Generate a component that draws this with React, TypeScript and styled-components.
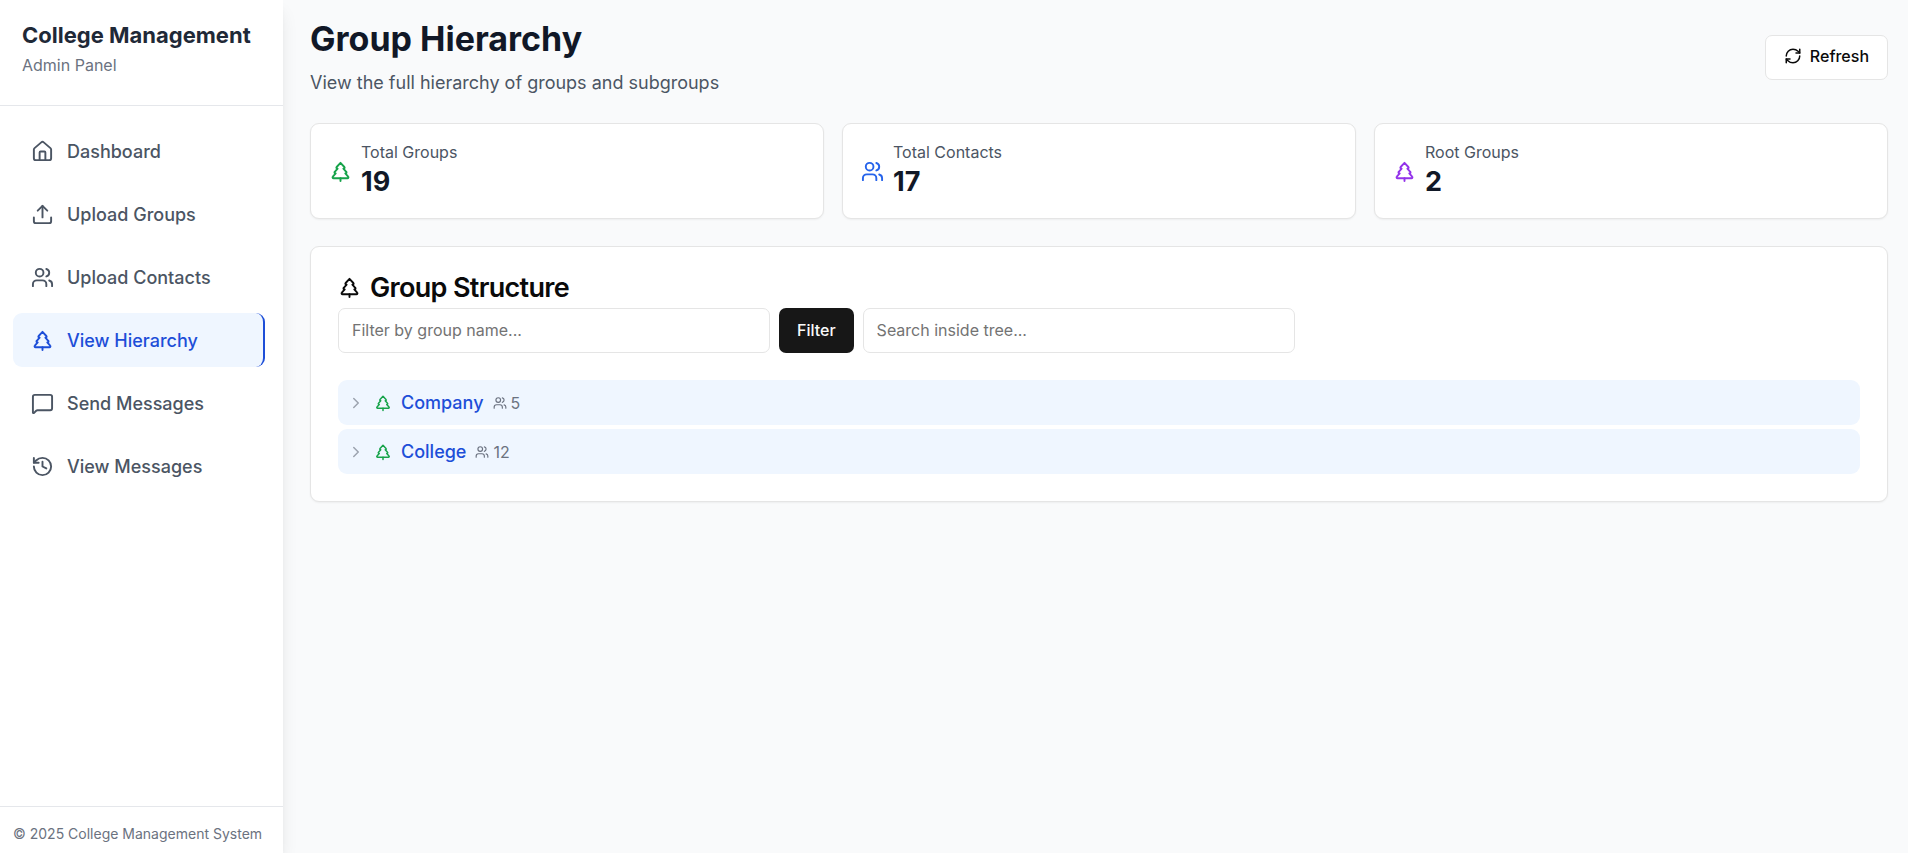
import React from "react";
import styled, { createGlobalStyle } from "styled-components";
import {
  ChevronRight,
  History,
  House,
  MessageSquare,
  RefreshCw,
  TreePine,
  Upload,
  Users,
} from "lucide-react";
import type { LucideIcon } from "lucide-react";

const GlobalStyle = createGlobalStyle`
  *, *::before, *::after { box-sizing: border-box; }
  body {
    margin: 0;
    background: #f9fafb;
    color: #0a0a0a;
    font-family: Inter, "Liberation Sans", sans-serif;
    font-size: 18px;
    line-height: 27px;
  }
  h1, h2, p, ul { margin: 0; padding: 0; }
  ul { list-style: none; }
  button, input { font: inherit; }
  svg { display: block; flex-shrink: 0; }
`;

const Shell = styled.div`
  display: flex;
  min-height: 100vh;
`;

const Sidebar = styled.aside`
  position: sticky;
  top: 0;
  display: flex;
  flex-direction: column;
  flex: 0 0 283px;
  height: 100vh;
  background: #fff;
  box-shadow: 0 11px 17px -3px rgba(0, 0, 0, 0.1), 0 4px 7px -4px rgba(0, 0, 0, 0.1);
`;

const Brand = styled.div`
  padding: 20px 22px 28px;
  border-bottom: 1px solid #e5e7eb;
`;

const BrandName = styled.p`
  color: #1f2937;
  font-size: 22px;
  font-weight: 700;
  line-height: 30px;
  white-space: nowrap;
`;

const BrandNote = styled.p`
  margin-top: 4px;
  color: #6b7280;
  font-size: 16px;
  line-height: 23px;
`;

const Nav = styled.nav`
  flex: 1;
  padding: 18px 18px 18px 13px;
`;

const NavList = styled.ul`
  display: flex;
  flex-direction: column;
  gap: 9px;
`;

const NavLink = styled.a<{ $active?: boolean }>`
  display: flex;
  align-items: center;
  gap: 13px;
  height: 54px;
  padding: 0 18px;
  border-radius: 9px;
  border-right: ${(p) => (p.$active ? "2px solid #1d4ed8" : "0")};
  background: ${(p) => (p.$active ? "#eff6ff" : "transparent")};
  color: ${(p) => (p.$active ? "#1d4ed8" : "#4b5563")};
  font-weight: 500;
  text-decoration: none;
`;

const SidebarFooter = styled.footer`
  padding: 18px 13px 10px;
  border-top: 1px solid #e5e7eb;
  color: #6b7280;
  font-size: 14px;
  line-height: 18px;
  white-space: nowrap;
`;

const Main = styled.main`
  display: flex;
  flex: 1;
  flex-direction: column;
  gap: 27px;
  min-width: 0;
  padding: 18px 20px 27px 27px;
`;

const PageHeader = styled.header`
  display: flex;
  align-items: center;
  justify-content: space-between;
`;

const PageTitle = styled.h1`
  color: #111827;
  font-size: 34px;
  font-weight: 700;
  line-height: 42px;
`;

const PageNote = styled.p`
  margin-top: 9px;
  color: #4b5563;
`;

const Button = styled.button<{ $primary?: boolean }>`
  display: inline-flex;
  align-items: center;
  justify-content: center;
  gap: 8px;
  height: 45px;
  padding: 0 18px 2px;
  border: ${(p) => (p.$primary ? "0" : "1px solid #e5e5e5")};
  border-radius: 7px;
  background: ${(p) => (p.$primary ? "#171717" : "#fff")};
  color: ${(p) => (p.$primary ? "#fafafa" : "#0a0a0a")};
  font-size: 16px;
  font-weight: 500;
  line-height: 22px;
  cursor: pointer;
`;

const Card = styled.section`
  border: 1px solid #e5e5e5;
  border-radius: 9px;
  background: #fff;
  box-shadow: 0 1px 2px rgba(0, 0, 0, 0.05);
`;

const Stats = styled.div`
  display: grid;
  grid-template-columns: repeat(3, minmax(0, 1fr));
  gap: 18px;
`;

const StatCard = styled(Card)<{ $tone: string }>`
  display: flex;
  align-items: center;
  gap: 9px;
  padding: 18px;

  svg { color: ${(p) => p.$tone}; }
`;

const StatLabel = styled.p`
  margin-bottom: 2px;
  color: #4b5563;
  font-size: 16px;
  line-height: 20px;
`;

const StatValue = styled.p`
  color: #111827;
  font-size: 27px;
  font-weight: 700;
  line-height: 36px;
`;

const StructureCard = styled(Card)`
  padding: 27px;
`;

const StructureTitle = styled.h2`
  display: flex;
  align-items: center;
  gap: 9px;
  font-size: 27px;
  font-weight: 600;
  line-height: 27px;
  letter-spacing: -0.025em;
`;

const Filters = styled.form`
  display: flex;
  gap: 9px;
  margin: 7px 0 27px;
`;

const TextField = styled.input`
  flex: 0 1 432px;
  min-width: 0;
  height: 45px;
  padding: 0 13px 2px;
  border: 1px solid #e5e5e5;
  border-radius: 7px;
  background: #fff;
  color: #0a0a0a;
  font-size: 16px;

  &::placeholder { color: #737373; opacity: 1; }
`;

const Tree = styled.ul`
  display: flex;
  flex-direction: column;
  gap: 4px;
`;

const TreeRow = styled.li`
  display: flex;
  align-items: center;
  gap: 9px;
  height: 45px;
  padding: 0 9px;
  border-radius: 9px;
  background: #eff6ff;
`;

const Toggle = styled.button`
  padding: 0;
  border: 0;
  background: none;
  color: #9ca3af;
  cursor: pointer;
`;

const GroupName = styled.span`
  color: #1d4ed8;
  font-weight: 500;
`;

const Members = styled.span`
  display: flex;
  align-items: center;
  gap: 4px;
  color: #6b7280;
  font-size: 16px;
  line-height: 22px;
`;

const navItems: { label: string; icon: LucideIcon; active?: boolean }[] = [
  { label: "Dashboard", icon: House },
  { label: "Upload Groups", icon: Upload },
  { label: "Upload Contacts", icon: Users },
  { label: "View Hierarchy", icon: TreePine, active: true },
  { label: "Send Messages", icon: MessageSquare },
  { label: "View Messages", icon: History },
];

const stats: { label: string; value: number; icon: LucideIcon; tone: string }[] = [
  { label: "Total Groups", value: 19, icon: TreePine, tone: "#16a34a" },
  { label: "Total Contacts", value: 17, icon: Users, tone: "#2563eb" },
  { label: "Root Groups", value: 2, icon: TreePine, tone: "#9333ea" },
];

const groups = [
  { name: "Company", members: 5 },
  { name: "College", members: 12 },
];

export default function App() {
  return (
    <>
      <GlobalStyle />
      <Shell>
        <Sidebar>
          <Brand>
            <BrandName>College Management</BrandName>
            <BrandNote>Admin Panel</BrandNote>
          </Brand>
          <Nav>
            <NavList>
              {navItems.map(({ label, icon: Icon, active }) => (
                <li key={label}>
                  <NavLink href="#" $active={active} aria-current={active ? "page" : undefined}>
                    <Icon size={23} />
                    {label}
                  </NavLink>
                </li>
              ))}
            </NavList>
          </Nav>
          <SidebarFooter>© 2025 College Management System</SidebarFooter>
        </Sidebar>

        <Main>
          <PageHeader>
            <div>
              <PageTitle>Group Hierarchy</PageTitle>
              <PageNote>View the full hierarchy of groups and subgroups</PageNote>
            </div>
            <Button type="button">
              <RefreshCw size={18} />
              Refresh
            </Button>
          </PageHeader>

          <Stats>
            {stats.map(({ label, value, icon: Icon, tone }) => (
              <StatCard key={label} $tone={tone}>
                <Icon size={23} />
                <div>
                  <StatLabel>{label}</StatLabel>
                  <StatValue>{value}</StatValue>
                </div>
              </StatCard>
            ))}
          </Stats>

          <StructureCard>
            <StructureTitle>
              <TreePine size={23} />
              Group Structure
            </StructureTitle>
            <Filters onSubmit={(e) => e.preventDefault()}>
              <TextField aria-label="Filter by group name" placeholder="Filter by group name..." />
              <Button type="submit" $primary>Filter</Button>
              <TextField aria-label="Search inside tree" placeholder="Search inside tree..." />
            </Filters>
            <Tree>
              {groups.map(({ name, members }) => (
                <TreeRow key={name}>
                  <Toggle type="button" aria-label={`Expand ${name}`}>
                    <ChevronRight size={18} />
                  </Toggle>
                  <TreePine size={18} color="#16a34a" />
                  <GroupName>{name}</GroupName>
                  <Members>
                    <Users size={14} />
                    {members}
                  </Members>
                </TreeRow>
              ))}
            </Tree>
          </StructureCard>
        </Main>
      </Shell>
    </>
  );
}
